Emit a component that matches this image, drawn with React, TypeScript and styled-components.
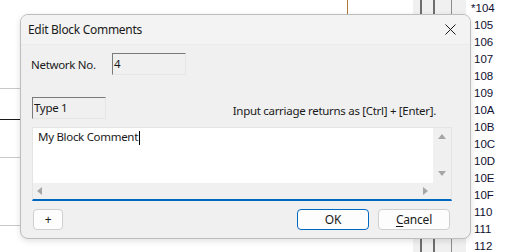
import styled, { createGlobalStyle } from "styled-components";

const GlobalStyle = createGlobalStyle`
  html, body {
    margin: 0;
    padding: 0;
    background: #ffffff;
    overflow: hidden;
  }
  * {
    box-sizing: border-box;
  }
`;

const uiFont = `"Noto Sans", "Open Sans", sans-serif`;

const rows = ["*104", "105", "106", "107", "108", "109", "10A", "10B", "10C", "10D", "10E", "10F", "110", "111", "112"];

const Screen = styled.div`
  position: relative;
  width: 507px;
  height: 252px;
  display: flex;
  overflow: hidden;
  background: #ffffff;
`;

const Ladder = styled.div`
  position: relative;
  width: 413px;
  height: 100%;
`;

const Rung = styled.div<{ $top: number; $dark?: boolean }>`
  position: absolute;
  left: 0;
  right: 0;
  top: ${(p) => p.$top}px;
  height: 1px;
  background: ${(p) => (p.$dark ? "#1a1a1a" : "#c8c8c8")};
`;

const Wire = styled.div`
  position: absolute;
  left: 347px;
  top: 0;
  width: 1px;
  height: 40px;
  background: #b07838;
`;

const Gutter = styled.div`
  width: 53px;
  height: 100%;
  background: #f0f0f0;
  display: flex;
`;

const Rail = styled.div<{ $w: number; $gap: number; $color: string }>`
  width: ${(p) => p.$w}px;
  margin-left: ${(p) => p.$gap}px;
  height: 100%;
  background: ${(p) => p.$color};
`;

const Numbers = styled.div`
  flex: 1;
  display: flex;
  flex-direction: column;
  padding-left: 8px;
  font-family: "Liberation Sans", Arial, sans-serif;
  font-size: 11.5px;
  color: #101030;
`;

const Num = styled.div`
  height: 17px;
  line-height: 17px;
  span {
    margin-left: -3px;
  }
`;

const Dialog = styled.div`
  position: absolute;
  left: 20px;
  top: 14px;
  width: 451px;
  height: 225px;
  border: 1px solid #bdbdbd;
  border-radius: 8px;
  background: #f0f0f0;
  box-shadow: 0 2px 6px rgba(0, 0, 0, 0.12);
  display: flex;
  flex-direction: column;
  font-family: ${uiFont};
  font-size: 11.5px;
  letter-spacing: -0.3px;
  color: #1a1a1a;
  overflow: hidden;
`;

const TitleBar = styled.div`
  height: 30px;
  flex-shrink: 0;
  display: flex;
  align-items: center;
  justify-content: space-between;
  padding: 0 10px 0 7px;
  background: #f3f3f3;
  border-bottom: 1px solid #ebebeb;
  font-size: 12px;
`;

const Close = styled.button`
  width: 20px;
  height: 20px;
  border: none;
  background: transparent;
  padding: 0;
  display: flex;
  align-items: center;
  justify-content: center;
`;

const Body = styled.div`
  flex: 1;
  display: flex;
  flex-direction: column;
  padding: 8px 18px 8px 11px;
`;

const Row = styled.div<{ $mt: number }>`
  display: flex;
  align-items: center;
  margin-top: ${(p) => p.$mt}px;
`;

const Label = styled.div`
  width: 81px;
  margin-left: -1px;
  padding-top: 1px;
`;

const Sunken = styled.div`
  width: 74px;
  height: 22px;
  border: 1px solid;
  border-color: #7a7a7a #e6e6e6 #e6e6e6 #7a7a7a;
  background: #f0f0f0;
  padding-left: 1px;
  line-height: 20px;
`;

const Hint = styled.div`
  margin-left: auto;
  margin-right: 16px;
  padding-top: 4px;
`;

const Editor = styled.div`
  margin-top: 8px;
  height: 74px;
  display: grid;
  grid-template-columns: 1fr 18px;
  grid-template-rows: 1fr 16px;
  border: 1px solid #e4e4e4;
  border-bottom: 2px solid #0067c0;
  background: #f0f0f0;
`;

const TextArea = styled.div`
  background: #ffffff;
  padding: 1px 5px;
  line-height: 16px;
  display: flex;
  align-items: flex-start;
`;

const Caret = styled.span`
  display: inline-block;
  width: 1px;
  height: 14px;
  margin-top: 2px;
  margin-left: 1px;
  background: #000000;
`;

const VScroll = styled.div`
  display: flex;
  flex-direction: column;
  justify-content: space-between;
  align-items: center;
  padding: 6px 0 7px;
`;

const HScroll = styled.div`
  display: flex;
  justify-content: space-between;
  align-items: center;
  padding: 0 5px 0 4px;
`;

const Arrow = styled.div<{ $dir: "up" | "down" | "left" | "right" }>`
  width: 0;
  height: 0;
  border-style: solid;
  border-color: transparent;
  ${(p) =>
    p.$dir === "up"
      ? "border-width: 0 4px 5px 4px; border-bottom-color: #a6a6a6;"
      : p.$dir === "down"
      ? "border-width: 5px 4px 0 4px; border-top-color: #a6a6a6;"
      : p.$dir === "left"
      ? "border-width: 4px 5px 4px 0; border-right-color: #a6a6a6;"
      : "border-width: 4px 0 4px 5px; border-left-color: #a6a6a6;"}
`;

const Footer = styled.div`
  margin-top: 8px;
  display: flex;
  align-items: center;
  gap: 9px;
  padding-left: 1px;
  padding-right: 2px;
`;

const Button = styled.button<{ $w: number; $primary?: boolean }>`
  width: ${(p) => p.$w}px;
  height: 21px;
  border-radius: 4px;
  border: 1px solid ${(p) => (p.$primary ? "#0067c0" : "#d0d0d0")};
  box-shadow: ${(p) => (p.$primary ? "inset 0 0 0 1px #ffffff" : "none")};
  background: #fdfdfd;
  font-family: ${uiFont};
  font-size: 12px;
  letter-spacing: -0.2px;
  color: #1a1a1a;
  padding: 0;
  u {
    text-decoration-thickness: 1px;
    text-underline-offset: 2px;
  }
`;

const Spacer = styled.div`
  flex: 1;
`;

export default function App() {
  return (
    <>
      <GlobalStyle />
      <Screen>
        <Ladder>
          <Wire />
          <Rung $top={88} />
          <Rung $top={119} $dark />
          <Rung $top={157} />
          <Rung $top={225} />
        </Ladder>
        <Gutter>
          <Rail $w={2} $gap={7} $color="#6e6e6e" />
          <Rail $w={2} $gap={11} $color="#6e6e6e" />
          <Rail $w={1} $gap={16} $color="#8c8c8c" />
        </Gutter>
        <Numbers>
          {rows.map((r) => (
            <Num key={r}>
              {r.startsWith("*") ? (
                <>
                  <span>*</span>
                  {r.slice(1)}
                </>
              ) : (
                r
              )}
            </Num>
          ))}
        </Numbers>
        <Dialog>
          <TitleBar>
            <span>Edit Block Comments</span>
            <Close aria-label="Close">
              <svg width="11" height="11" viewBox="0 0 11 11">
                <path d="M0.5 0.5 L10.5 10.5 M10.5 0.5 L0.5 10.5" stroke="#1a1a1a" strokeWidth="1" />
              </svg>
            </Close>
          </TitleBar>
          <Body>
            <Row $mt={0}>
              <Label>Network No.</Label>
              <Sunken>4</Sunken>
            </Row>
            <Row $mt={22}>
              <Sunken>Type 1</Sunken>
              <Hint>Input carriage returns as [Ctrl] + [Enter].</Hint>
            </Row>
            <Editor>
              <TextArea>
                My Block Comment
                <Caret />
              </TextArea>
              <VScroll>
                <Arrow $dir="up" />
                <Arrow $dir="down" />
              </VScroll>
              <HScroll>
                <Arrow $dir="left" />
                <Arrow $dir="right" />
              </HScroll>
              <div />
            </Editor>
            <Footer>
              <Button $w={30}>+</Button>
              <Spacer />
              <Button $w={72} $primary>
                OK
              </Button>
              <Button $w={72}>
                <u>C</u>ancel
              </Button>
            </Footer>
          </Body>
        </Dialog>
      </Screen>
    </>
  );
}
